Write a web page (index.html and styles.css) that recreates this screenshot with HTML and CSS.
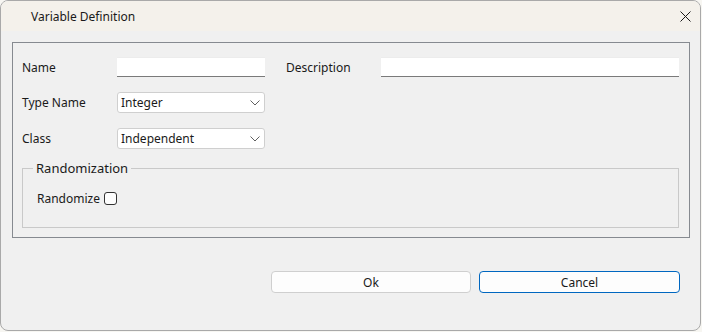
FILE: index.html
```html
<!DOCTYPE html>
<html lang="en">
<head>
  <meta charset="UTF-8" />
  <title>Variable Definition</title>
  <link rel="stylesheet" href="styles.css">
</head>
<body>
  <div class="window">
    <div class="titlebar">
      <span class="title">Variable Definition</span>
      <svg class="close" width="11" height="11" viewBox="0 0 11 11">
        <path d="M0.5 0.5 L10.5 10.5 M10.5 0.5 L0.5 10.5" stroke="#1a1a1a" stroke-width="1" fill="none" />
      </svg>
    </div>

    <div class="content">
      <div class="group">
        <div class="fields">
          <label class="lbl">Name</label>
          <input class="text-input" type="text" />
          <label class="lbl lbl-desc">Description</label>
          <input class="text-input" type="text" />

          <label class="lbl">Type Name</label>
          <div class="combo">
            <span>Integer</span>
            <svg class="chev" width="10" height="6" viewBox="0 0 10 6"><path d="M0.5 0.5 L5 5 L9.5 0.5" stroke="#606060" fill="none" /></svg>
          </div>
          <span></span><span></span>

          <label class="lbl">Class</label>
          <div class="combo">
            <span>Independent</span>
            <svg class="chev" width="10" height="6" viewBox="0 0 10 6"><path d="M0.5 0.5 L5 5 L9.5 0.5" stroke="#606060" fill="none" /></svg>
          </div>
          <span></span><span></span>
        </div>

        <fieldset class="random">
          <legend>Randomization</legend>
          <div class="check-row">
            <span>Randomize</span>
            <span class="checkbox"></span>
          </div>
        </fieldset>
      </div>

      <div class="buttons">
        <button class="btn">Ok</button>
        <button class="btn btn-focus">Cancel</button>
      </div>
    </div>
  </div>
</body>
</html>
```

FILE: styles.css
```css
body {
  margin: 0;
  background: #f7f6f2;
  font-family: 'Noto Sans', 'Open Sans', sans-serif;
  font-size: 12px;
  color: #1a1a1a;
}

.window {
  width: 699px;
  height: 329px;
  border: 1px solid #a9a9a9;
  border-radius: 8px;
  background: #f0f0f0;
  overflow: hidden;
}

.titlebar {
  height: 30px;
  background: #f4f1eb;
  display: flex;
  align-items: center;
  padding: 0 9px 0 30px;
}
.title {
  flex: 1;
  font-size: 12px;
}
.close {
  display: block;
}

.content {
  padding: 11px 0 0 11px;
}

.group {
  box-sizing: border-box;
  width: 678px;
  border: 1px solid #868a90;
  padding: 14px 10px 9px 9px;
}

.fields {
  display: grid;
  grid-template-columns: 95px 148px 116px 298px;
  grid-template-rows: 20px 21px 21px;
  row-gap: 15px;
  align-items: center;
}
.lbl {
  font-size: 12px;
}
.lbl-desc {
  padding-left: 21px;
}

.text-input {
  box-sizing: border-box;
  height: 20px;
  width: 100%;
  margin: 0;
  border: 0;
  border-top: 1px solid #ececec;
  border-bottom: 1px solid #7a7a7a;
  background: #fff;
  outline: none;
}

.combo {
  box-sizing: border-box;
  height: 21px;
  border: 1px solid #cfcfcf;
  border-radius: 3px;
  background: #fff;
  display: flex;
  align-items: center;
  justify-content: space-between;
  padding: 0 4px 0 3px;
  font-size: 12px;
}
.chev {
  display: block;
}

.random {
  margin: 10px 0 0 0;
  padding: 0 0 22px 14px;
  border: 1px solid #c9c9c9;
  min-width: 0;
}
.random legend {
  margin-left: -4px;
  padding: 0 3px;
  font-size: 13px;
  line-height: 18px;
}
.check-row {
  display: flex;
  align-items: center;
  gap: 4px;
  margin-top: 15px;
  height: 13px;
}
.checkbox {
  width: 11px;
  height: 11px;
  border: 1px solid #333;
  border-radius: 3px;
  background: #fdfdfd;
}

.buttons {
  display: flex;
  justify-content: flex-end;
  gap: 8px;
  margin-top: 33px;
  padding-right: 20px;
}
.btn {
  box-sizing: border-box;
  width: 200px;
  height: 22px;
  border: 1px solid #cfcfcf;
  border-radius: 4px;
  background: #fdfdfd;
  font-family: 'Noto Sans', 'Open Sans', sans-serif;
  font-size: 12px;
  color: #1a1a1a;
  padding: 0;
}
.btn-focus {
  width: 201px;
  border-color: #0067c0;
}
```
